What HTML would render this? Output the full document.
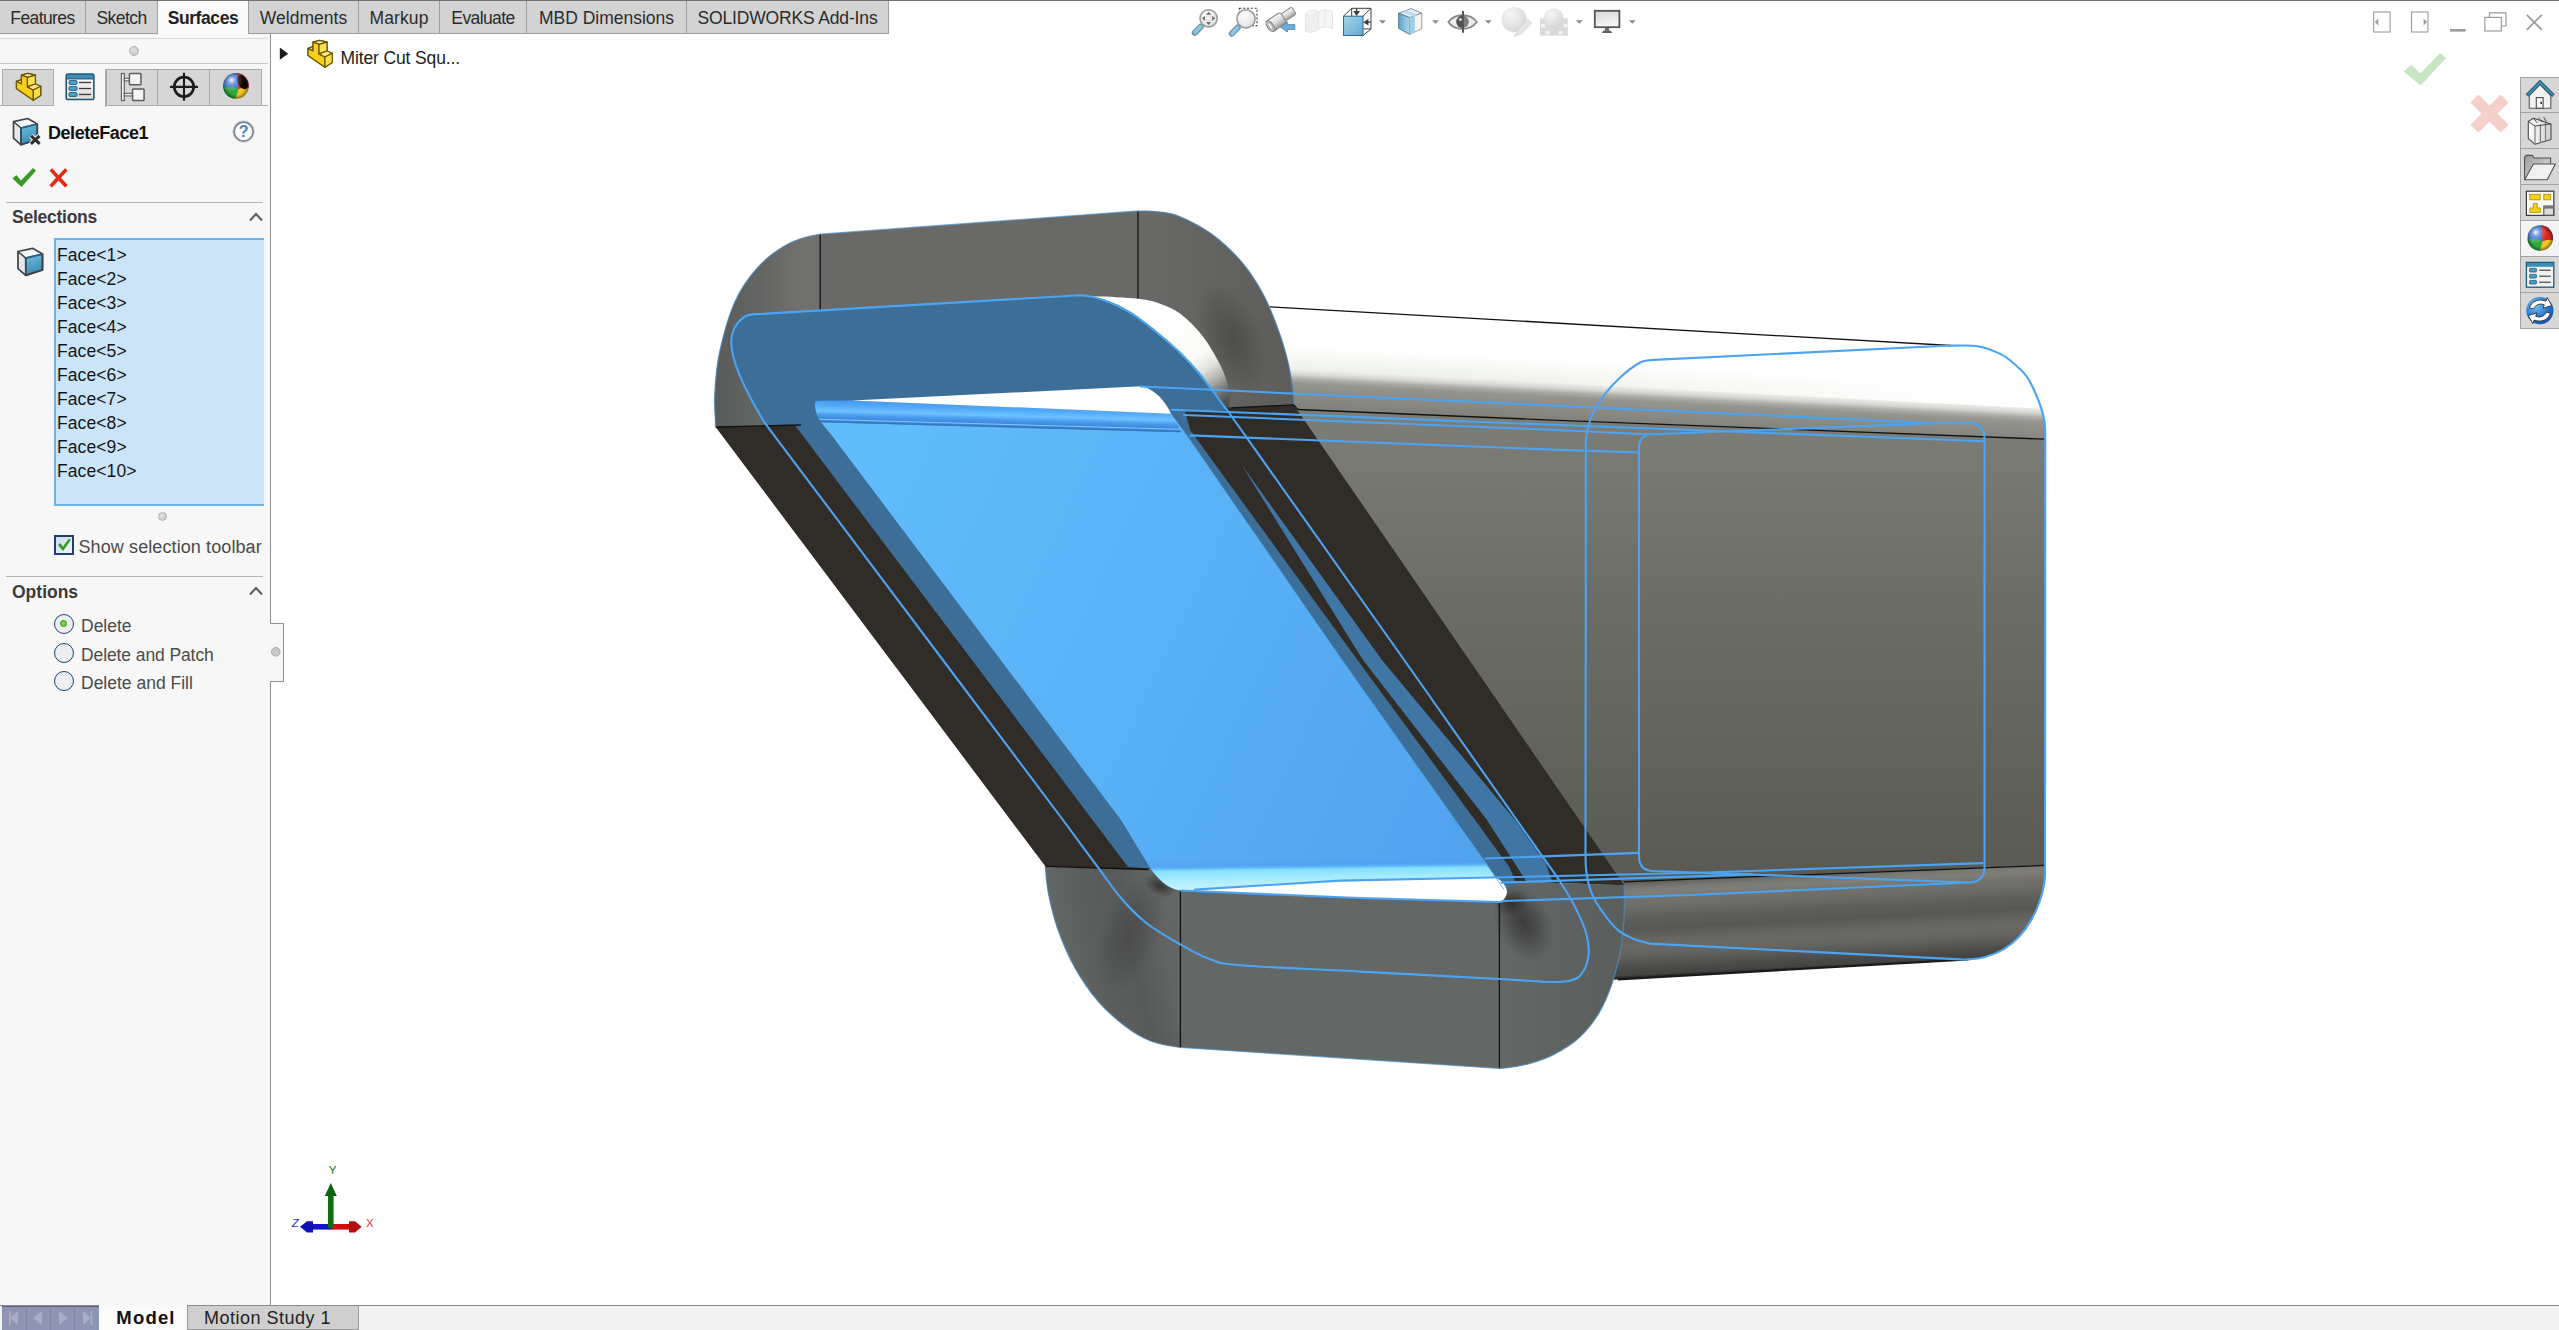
<!DOCTYPE html>
<html lang="en">
<head>
<meta charset="utf-8">
<title>DeleteFace1 - SOLIDWORKS</title>
<style>
*{box-sizing:border-box;margin:0;padding:0}
html,body{width:2559px;height:1330px;overflow:hidden;background:#fff}
body{font-family:"Liberation Sans","DejaVu Sans",sans-serif;color:#1a1a1a;position:relative}
.abs{position:absolute}
#topline{left:0;top:0;width:2559px;height:1px;background:#707070}
/* command manager tabs */
#cmtabs{left:0;top:1px;height:33px;width:889px;background:#d3d3d3;border-bottom:1px solid #9c9c9c}
.cmt{position:absolute;top:0;height:32px;border-right:1px solid #9e9e9e;font-size:17.5px;line-height:35px;color:#2b2b2b;white-space:nowrap;text-align:center}
.cmt.act{background:#fafafa;font-weight:bold;height:33px;color:#222}
/* left panel */
#panel{left:0;top:34px;width:271px;height:1271px;background:#f7f7f7;border-right:1px solid #8f8f8f}
.hline{position:absolute;height:1px;background:#b4b4b4}
.dot{position:absolute;border-radius:50%;background:radial-gradient(circle at 40% 35%,#e2e2e2,#c2c2c2);border:1px solid #b0b0b0}
.ptab{position:absolute;top:69px;height:37px;width:52px;background:#d6d6d6;border:1px solid #a9a9a9;border-left:none}
.ptab.act{background:#f7f7f7;border-bottom:none;border-top-color:#f7f7f7;height:38px}
.sect{position:absolute;left:12px;font-weight:bold;font-size:17.5px;color:#3a3a3a;white-space:nowrap;letter-spacing:-0.35px}
.lbl{position:absolute;font-size:17.5px;color:#4b4b4b;white-space:nowrap}
#list{left:54px;top:204px;width:210px;height:268px;background:#cce4f7;border:2px solid #6db3e8;border-right:none}
#list div{position:absolute;left:1px;margin-top:0.5px;font-size:17.5px;color:#161616;white-space:nowrap;letter-spacing:0.1px}
.radio{position:absolute;width:20px;height:20px;border-radius:50%;border:1.6px solid #203f6b;background:radial-gradient(circle at 50% 55%,#f6efe6 0,#e6eef7 70%,#dfe9f4 100%)}
/* bottom bar */
#bbar{left:0;top:1305px;width:2559px;height:25px;background:#f3f3f3;border-top:1px solid #8a8a8a}
</style>
</head>
<body>
<div class="abs" id="topline"></div>

<!-- ===== 3D MODEL ===== -->
<svg class="abs" id="model" style="left:271px;top:34px" width="2288" height="1271" viewBox="271 34 2288 1271">
<defs>
<linearGradient id="gTop" gradientUnits="userSpaceOnUse" x1="1560" y1="322" x2="1555" y2="418">
 <stop offset="0" stop-color="#ffffff"/><stop offset="0.40" stop-color="#ffffff"/><stop offset="0.50" stop-color="#f6f8f3"/><stop offset="0.63" stop-color="#eff1ec"/>
 <stop offset="0.69" stop-color="#d5d6d1"/><stop offset="0.73" stop-color="#aeaea9"/><stop offset="0.78" stop-color="#959590"/><stop offset="0.86" stop-color="#8e8d88"/><stop offset="1" stop-color="#83837e"/>
</linearGradient>
<linearGradient id="gTopW" gradientUnits="userSpaceOnUse" x1="1480" y1="0" x2="1960" y2="0">
 <stop offset="0" stop-color="#ffffff" stop-opacity="0"/><stop offset="1" stop-color="#ffffff" stop-opacity="0.9"/>
</linearGradient>
<linearGradient id="gSide" gradientUnits="userSpaceOnUse" x1="1700" y1="420" x2="1700" y2="880">
 <stop offset="0" stop-color="#7c7d77"/><stop offset="0.174" stop-color="#757670"/><stop offset="0.39" stop-color="#6c6d67"/><stop offset="0.913" stop-color="#5c5d57"/><stop offset="1" stop-color="#595a54"/>
</linearGradient>
<linearGradient id="gBot" gradientUnits="userSpaceOnUse" x1="1800" y1="874" x2="1805" y2="969">
 <stop offset="0" stop-color="#62625e"/><stop offset="0.06" stop-color="#7a7a75"/><stop offset="0.11" stop-color="#7f7e78"/><stop offset="0.17" stop-color="#74736e"/>
 <stop offset="0.26" stop-color="#6c6c68"/><stop offset="0.36" stop-color="#5f605d"/><stop offset="0.49" stop-color="#565856"/><stop offset="0.58" stop-color="#63645f"/>
 <stop offset="0.66" stop-color="#696a66"/><stop offset="0.74" stop-color="#656662"/><stop offset="0.82" stop-color="#595a57"/><stop offset="0.90" stop-color="#4b4b49"/>
 <stop offset="0.97" stop-color="#434341"/><stop offset="1" stop-color="#1c1c1a"/>
</linearGradient>
<linearGradient id="gTFL" gradientUnits="userSpaceOnUse" x1="715" y1="0" x2="822" y2="0">
 <stop offset="0" stop-color="#5a5c5b"/><stop offset="0.45" stop-color="#646664"/><stop offset="0.85" stop-color="#727371"/><stop offset="1" stop-color="#6e6f6d"/>
</linearGradient>
<linearGradient id="gTFR" gradientUnits="userSpaceOnUse" x1="1138" y1="0" x2="1292" y2="0">
 <stop offset="0" stop-color="#696a68"/><stop offset="0.4" stop-color="#646563"/><stop offset="1" stop-color="#5d5e5c"/>
</linearGradient>
<linearGradient id="gBFL" gradientUnits="userSpaceOnUse" x1="1050" y1="960" x2="1182" y2="930">
 <stop offset="0" stop-color="#666a69"/><stop offset="0.3" stop-color="#5c5f5e"/><stop offset="0.6" stop-color="#575a59"/><stop offset="0.85" stop-color="#616463"/><stop offset="1" stop-color="#636765"/>
</linearGradient>
<linearGradient id="gBFR" gradientUnits="userSpaceOnUse" x1="1499" y1="0" x2="1625" y2="0">
 <stop offset="0" stop-color="#636765"/><stop offset="0.5" stop-color="#5e6261"/><stop offset="1" stop-color="#5a5e5d"/>
</linearGradient>
<linearGradient id="gBlue" gradientUnits="userSpaceOnUse" x1="850" y1="500" x2="1480" y2="800">
 <stop offset="0" stop-color="#60bcfc"/><stop offset="0.5" stop-color="#59b1f6"/><stop offset="1" stop-color="#51a3ed"/>
</linearGradient>
<linearGradient id="gFilW" gradientUnits="userSpaceOnUse" x1="1160" y1="300" x2="1228" y2="400">
 <stop offset="0" stop-color="#ffffff"/><stop offset="0.55" stop-color="#fbfcf9"/><stop offset="0.68" stop-color="#e4e5e0"/><stop offset="0.8" stop-color="#b1b2ad"/><stop offset="0.9" stop-color="#787875"/><stop offset="1" stop-color="#4f4f4d"/>
</linearGradient>
<linearGradient id="gBand" gradientUnits="userSpaceOnUse" x1="1000" y1="405" x2="999.4" y2="427">
 <stop offset="0" stop-color="#479af0"/><stop offset="0.22" stop-color="#52a9f7"/><stop offset="0.48" stop-color="#6cc3ff"/><stop offset="0.66" stop-color="#4b9def"/><stop offset="0.84" stop-color="#3c89da"/><stop offset="1" stop-color="#438fde"/>
</linearGradient>
<linearGradient id="gCyan" gradientUnits="userSpaceOnUse" x1="1340" y1="858" x2="1340.4" y2="890">
 <stop offset="0" stop-color="#4f9fee" stop-opacity="0"/><stop offset="0.18" stop-color="#4f9fee" stop-opacity="0.55"/><stop offset="0.27" stop-color="#5cb8fa"/><stop offset="0.34" stop-color="#84dfff"/><stop offset="0.6" stop-color="#a6ebff"/><stop offset="1" stop-color="#d0f5ff"/>
</linearGradient>
<filter id="blur9" x="-50%" y="-50%" width="200%" height="200%"><feGaussianBlur stdDeviation="9"/></filter>
<filter id="blur4" x="-50%" y="-50%" width="200%" height="200%"><feGaussianBlur stdDeviation="4"/></filter>
<filter id="blur2" x="-50%" y="-50%" width="200%" height="200%"><feGaussianBlur stdDeviation="2"/></filter>
<radialGradient id="rgA"><stop offset="0" stop-color="#3c3c3b" stop-opacity="0.62"/><stop offset="0.5" stop-color="#3c3c3b" stop-opacity="0.36"/><stop offset="1" stop-color="#3c3c3b" stop-opacity="0"/></radialGradient>
<radialGradient id="rgC"><stop offset="0" stop-color="#2f2f2e" stop-opacity="0.78"/><stop offset="0.5" stop-color="#353534" stop-opacity="0.45"/><stop offset="1" stop-color="#3c3c3b" stop-opacity="0"/></radialGradient>
<radialGradient id="rgB"><stop offset="0" stop-color="#262625" stop-opacity="0.8"/><stop offset="0.5" stop-color="#2a2a29" stop-opacity="0.4"/><stop offset="1" stop-color="#2a2a29" stop-opacity="0"/></radialGradient>
<clipPath id="cpBF"><path d="M1045.3,866.3C1046.0,874.4 1046.3,883.2 1048.4,893.7 C1050.5,904.2 1053.5,917.2 1057.9,929.5 C1062.3,941.8 1068.0,955.5 1074.7,967.4 C1081.4,979.3 1089.5,991.2 1097.9,1001.0 C1106.3,1010.8 1116.5,1019.6 1125.3,1026.3 C1134.1,1033.0 1141.4,1037.5 1150.5,1041.0 C1159.6,1044.5 1169.8,1046.0 1180.0,1047.4L1499.4,1068.4C1509.7,1067.9 1520.4,1065.9 1529.6,1063.5 C1538.8,1061.1 1546.2,1058.5 1554.5,1054.2 C1562.8,1049.9 1571.9,1044.5 1579.3,1037.6 C1586.7,1030.7 1593.6,1022.0 1599.1,1012.8 C1604.6,1003.6 1608.8,993.1 1612.4,982.5 C1616.0,971.9 1618.7,959.9 1620.6,949.4 C1622.5,938.9 1623.4,930.3 1624.0,919.6 C1624.6,908.9 1624.2,895.2 1624.2,885.3Z"/></clipPath>
</defs>
<path d="M1240.0,304.9L1950.6,345.5C1960.2,345.9 1969.3,344.7 1977.7,346.2 C1986.1,347.7 1994.8,351.2 2001.2,354.4 C2007.6,357.6 2011.5,361.4 2016.0,365.5 C2020.5,369.6 2024.4,372.6 2028.2,378.7 C2032.0,384.8 2036.4,395.2 2039.1,402.2 C2041.8,409.2 2043.3,414.3 2044.3,420.5 C2045.3,426.7 2045.1,431.4 2045.3,439.6L1298.0,409.5 L1280.0,404.0Z" fill="url(#gTop)"/>
<path d="M1480,317.6 L1950.6,345.5 C1990,346 2028,372 2041,408.6 L1480,379.4 Z" fill="url(#gTopW)"/>
<path d="M1280.0,404.0L1298.0,409.5 L2045.3,439.2 L2045.0,865.4 L1610.0,882.5Z" fill="url(#gSide)"/>
<path d="M1600.0,882.7L2045.0,865.4C2044.9,873.2 2045.3,875.8 2044.5,881.6 C2043.7,887.5 2042.2,894.0 2040.0,900.5 C2037.8,907.0 2034.5,914.4 2031.0,920.4 C2027.5,926.4 2023.7,931.8 2019.2,936.6 C2014.7,941.4 2009.6,945.8 2003.9,949.2 C1998.2,952.6 1991.5,955.2 1985.0,956.9 C1978.5,958.6 1973.4,958.9 1965.1,959.6L1590.0,981.0Z" fill="url(#gBot)"/>
<path d="M715.6,427.0C715.3,416.2 714.1,407.4 714.7,395.0 C715.4,382.6 716.1,368.1 719.5,352.5 C722.9,336.9 728.5,315.9 735.0,301.6 C741.5,287.3 749.8,276.1 758.6,266.5 C767.4,256.9 777.8,249.4 788.0,244.0 C798.2,238.6 809.3,236.2 820.0,234.2L1138.0,211.0C1146.3,210.8 1151.1,210.9 1158.0,211.8 C1164.9,212.7 1170.5,212.7 1179.6,216.5 C1188.7,220.3 1202.2,227.0 1212.7,234.7 C1223.2,242.4 1234.2,253.2 1242.5,262.9 C1250.8,272.6 1256.9,282.8 1262.4,292.7 C1267.9,302.6 1271.8,312.5 1275.6,322.4 C1279.4,332.3 1282.9,342.8 1285.5,352.2 C1288.1,361.6 1289.8,369.9 1291.3,378.7 C1292.8,387.4 1293.7,397.0 1294.2,404.7Z" fill="#696a68"/>
<path d="M715.6,427.0C715.3,416.2 714.1,407.4 714.7,395.0 C715.4,382.6 716.1,368.1 719.5,352.5 C722.9,336.9 728.5,315.9 735.0,301.6 C741.5,287.3 749.8,276.1 758.6,266.5 C767.4,256.9 777.8,249.4 788.0,244.0 C798.2,238.6 809.3,236.2 820.0,234.2L820.2,423.0Z" fill="url(#gTFL)"/>
<path d="M1138.0,211.0C1146.3,210.8 1151.1,210.9 1158.0,211.8 C1164.9,212.7 1170.5,212.7 1179.6,216.5 C1188.7,220.3 1202.2,227.0 1212.7,234.7 C1223.2,242.4 1234.2,253.2 1242.5,262.9 C1250.8,272.6 1256.9,282.8 1262.4,292.7 C1267.9,302.6 1271.8,312.5 1275.6,322.4 C1279.4,332.3 1282.9,342.8 1285.5,352.2 C1288.1,361.6 1289.8,369.9 1291.3,378.7 C1292.8,387.4 1293.7,397.0 1294.2,404.7L1138.0,410.7Z" fill="url(#gTFR)"/>
<clipPath id="cpTFR"><path d="M1138.0,211.0C1146.3,210.8 1151.1,210.9 1158.0,211.8 C1164.9,212.7 1170.5,212.7 1179.6,216.5 C1188.7,220.3 1202.2,227.0 1212.7,234.7 C1223.2,242.4 1234.2,253.2 1242.5,262.9 C1250.8,272.6 1256.9,282.8 1262.4,292.7 C1267.9,302.6 1271.8,312.5 1275.6,322.4 C1279.4,332.3 1282.9,342.8 1285.5,352.2 C1288.1,361.6 1289.8,369.9 1291.3,378.7 C1292.8,387.4 1293.7,397.0 1294.2,404.7L1138.0,410.7Z"/></clipPath>
<g clip-path="url(#cpTFR)"><ellipse cx="1232" cy="338" rx="30" ry="58" transform="rotate(-22 1232 338)" fill="url(#rgA)" opacity="0.85"/></g>
<path d="M1080.0,295.3C1090.8,295.8 1096.7,297.7 1105.0,300.5 C1113.3,303.3 1121.7,307.3 1130.0,312.3 C1138.3,317.3 1146.5,324.1 1154.8,330.7 C1163.1,337.3 1172.1,345.0 1179.6,352.2 C1187.0,359.4 1193.4,366.5 1199.5,373.7 C1205.6,380.9 1211.3,389.1 1216.0,395.2 C1220.7,401.3 1222.7,405.0 1227.5,410.5C1230.9,403.9 1229.5,391.2 1227.4,383.7 C1225.3,376.1 1223.2,370.7 1219.0,362.6 C1214.8,354.5 1208.3,343.4 1202.0,335.3 C1195.7,327.2 1188.0,319.5 1181.0,314.2 C1174.0,308.9 1167.2,306.3 1160.0,303.7 C1152.8,301.1 1149.2,300.0 1138.0,298.8 C1126.8,297.6 1107.3,296.6 1092.6,296.3Z" fill="url(#gFilW)"/>
<path d="M715.6,427 L1293.7,404.7 L1624.2,885.3 L1045.3,866.3 Z" fill="#302c27"/>
<path d="M1045.3,866.3C1046.0,874.4 1046.3,883.2 1048.4,893.7 C1050.5,904.2 1053.5,917.2 1057.9,929.5 C1062.3,941.8 1068.0,955.5 1074.7,967.4 C1081.4,979.3 1089.5,991.2 1097.9,1001.0 C1106.3,1010.8 1116.5,1019.6 1125.3,1026.3 C1134.1,1033.0 1141.4,1037.5 1150.5,1041.0 C1159.6,1044.5 1169.8,1046.0 1180.0,1047.4L1499.4,1068.4C1509.7,1067.9 1520.4,1065.9 1529.6,1063.5 C1538.8,1061.1 1546.2,1058.5 1554.5,1054.2 C1562.8,1049.9 1571.9,1044.5 1579.3,1037.6 C1586.7,1030.7 1593.6,1022.0 1599.1,1012.8 C1604.6,1003.6 1608.8,993.1 1612.4,982.5 C1616.0,971.9 1618.7,959.9 1620.6,949.4 C1622.5,938.9 1623.4,930.3 1624.0,919.6 C1624.6,908.9 1624.2,895.2 1624.2,885.3Z" fill="#636765"/>
<path d="M1045.3,866.3C1046.0,874.4 1046.3,883.2 1048.4,893.7 C1050.5,904.2 1053.5,917.2 1057.9,929.5 C1062.3,941.8 1068.0,955.5 1074.7,967.4 C1081.4,979.3 1089.5,991.2 1097.9,1001.0 C1106.3,1010.8 1116.5,1019.6 1125.3,1026.3 C1134.1,1033.0 1141.4,1037.5 1150.5,1041.0 C1159.6,1044.5 1169.8,1046.0 1180.0,1047.4L1180.4,871.0Z" fill="url(#gBFL)"/>
<path d="M1499.4,1068.4C1509.7,1067.9 1520.4,1065.9 1529.6,1063.5 C1538.8,1061.1 1546.2,1058.5 1554.5,1054.2 C1562.8,1049.9 1571.9,1044.5 1579.3,1037.6 C1586.7,1030.7 1593.6,1022.0 1599.1,1012.8 C1604.6,1003.6 1608.8,993.1 1612.4,982.5 C1616.0,971.9 1618.7,959.9 1620.6,949.4 C1622.5,938.9 1623.4,930.3 1624.0,919.6 C1624.6,908.9 1624.2,895.2 1624.2,885.3L1499.4,881.2Z" fill="url(#gBFR)"/>
<g clip-path="url(#cpBF)"><ellipse cx="1130" cy="935" rx="30" ry="62" transform="rotate(20 1130 935)" fill="url(#rgA)" opacity="0.72"/><ellipse cx="1160" cy="886" rx="17" ry="10" transform="rotate(28 1160 886)" fill="url(#rgB)"/><ellipse cx="1523" cy="922" rx="27" ry="42" transform="rotate(-25 1523 922)" fill="url(#rgC)"/><ellipse cx="1511" cy="903" rx="17" ry="14" fill="url(#rgB)"/></g>
<path d="M766.2,424.8C759.6,414.9 754.8,405.8 750.3,397.5 C745.8,389.2 742.4,381.8 739.5,374.9 C736.6,368.0 734.5,361.7 733.1,356.0 C731.7,350.3 731.1,345.1 731.3,340.6 C731.4,336.1 732.3,332.4 734.0,328.9 C735.7,325.4 738.3,321.8 741.3,319.4 C744.3,317.0 744.0,315.6 752.1,314.4L1080.0,295.3C1090.8,295.8 1096.7,297.7 1105.0,300.5 C1113.3,303.3 1121.7,307.3 1130.0,312.3 C1138.3,317.3 1146.5,324.1 1154.8,330.7 C1163.1,337.3 1172.1,345.0 1179.6,352.2 C1187.0,359.4 1193.4,366.5 1199.5,373.7 C1205.6,380.9 1211.3,389.1 1216.0,395.2 C1220.7,401.3 1222.7,405.0 1227.5,410.5L1185.0,411.6 L1190.5,430.5 L1357.5,660.0 L1475.0,820.0 L1510.0,868.0 L1516.0,884.0L1504.0,889.5 L1180.4,890.5C1168,888.5 1160,881 1150.5,868.5L1128.0,867.0 L795.0,425.3Z" fill="#3c6e97"/>
<path d="M1241,464 L1382,660 L1515,820 L1546,864 L1552,881 L1526,881 L1487,820 L1363,660 Z" fill="#3f76a6"/>
<path d="M816.0,410.0L1170.5,413.0 L1183.0,430.0 L1342.0,660.0 L1489.5,868.4 L1504.0,889.5 L1180.4,890.5C1168,888.5 1160,881 1150.5,868.5L1121.0,820.0 L830.5,433.7C822,424 817,418 816,410 Z" fill="url(#gBlue)"/>
<path d="M814.8,404.0C815,402 816,401 818,400.8L851.6,400.6 L1171.0,413.6 L1176.0,421.0 L1181.0,432.2 L1000.0,427.2 L821.0,422.3C817,416 815,410 814.8,404 Z" fill="url(#gBand)"/>
<path d="M820.5,421.6 L1000,426.6 L1180.5,431.4" fill="none" stroke="#3676b8" stroke-width="1.5"/>
<path d="M819.5,419.3 L1000,424.3 L1179.5,429.2" fill="none" stroke="#7cc6ff" stroke-width="1.1"/>
<path d="M851.6,400.4L1140.6,386.3C1150,388 1158,394 1164,402 C1167,406 1169.5,410 1171,413.8Z" fill="#ffffff"/>
<path d="M1138.0,857.0L1482.0,857.0 L1496.0,878.0 L1480.0,877.8 L1340.0,880.6 L1197.0,890.0 L1180.4,890.5C1168,888.5 1160,881 1150.5,868.5 L1143,857 Z" fill="url(#gCyan)"/>
<path d="M1197.0,890.0L1340.0,880.6 L1480.0,877.8 L1495.0,877.5C1502,880 1506.5,886 1507,892 C1506.5,897 1503.5,901 1499.4,902L1360.0,898.0 L1180.4,890.5Z" fill="#ffffff"/>
<g fill="none" stroke="#111" stroke-width="1.3"><path d="M820.2,234.5 V310.5"/><path d="M1138,211.3 V298.5"/><path d="M1180.4,891 V1047.3"/><path d="M1499.4,902.5 V1068.3"/><path d="M1269.5,306.8 L1950.6,345.5"/><path d="M1298,409.5 L1540,419.6 L2045,439.2"/><path d="M1623.8,881.8 L2045,865.4"/><path d="M715.6,427 L801,425"/><path d="M1231.6,407.9 L1293.7,404.9 L1298,409.5"/><path d="M1045.3,866.3 L1148.4,869.5"/></g>
<path d="M1617.8,979.4 L1968.5,959.5" fill="none" stroke="#1a1a18" stroke-width="2"/>
<path d="M715.6,427.0C715.3,416.2 714.1,407.4 714.7,395.0 C715.4,382.6 716.1,368.1 719.5,352.5 C722.9,336.9 728.5,315.9 735.0,301.6 C741.5,287.3 749.8,276.1 758.6,266.5 C767.4,256.9 777.8,249.4 788.0,244.0 C798.2,238.6 809.3,236.2 820.0,234.2L1138.0,211.0C1146.3,210.8 1151.1,210.9 1158.0,211.8 C1164.9,212.7 1170.5,212.7 1179.6,216.5 C1188.7,220.3 1202.2,227.0 1212.7,234.7 C1223.2,242.4 1234.2,253.2 1242.5,262.9 C1250.8,272.6 1256.9,282.8 1262.4,292.7 C1267.9,302.6 1271.8,312.5 1275.6,322.4 C1279.4,332.3 1282.9,342.8 1285.5,352.2 C1288.1,361.6 1289.8,369.9 1291.3,378.7 C1292.8,387.4 1293.7,397.0 1294.2,404.7" fill="none" stroke="#4a8ec6" stroke-width="1.3" opacity="0.7"/>
<path d="M1045.3,866.3C1046.0,874.4 1046.3,883.2 1048.4,893.7 C1050.5,904.2 1053.5,917.2 1057.9,929.5 C1062.3,941.8 1068.0,955.5 1074.7,967.4 C1081.4,979.3 1089.5,991.2 1097.9,1001.0 C1106.3,1010.8 1116.5,1019.6 1125.3,1026.3 C1134.1,1033.0 1141.4,1037.5 1150.5,1041.0 C1159.6,1044.5 1169.8,1046.0 1180.0,1047.4L1499.4,1068.4C1509.7,1067.9 1520.4,1065.9 1529.6,1063.5 C1538.8,1061.1 1546.2,1058.5 1554.5,1054.2 C1562.8,1049.9 1571.9,1044.5 1579.3,1037.6 C1586.7,1030.7 1593.6,1022.0 1599.1,1012.8 C1604.6,1003.6 1608.8,993.1 1612.4,982.5 C1616.0,971.9 1618.7,959.9 1620.6,949.4 C1622.5,938.9 1623.4,930.3 1624.0,919.6 C1624.6,908.9 1624.2,895.2 1624.2,885.3" fill="none" stroke="#4a8ec6" stroke-width="1.3" opacity="0.7"/>
<g fill="none" stroke="#4ba4f3" stroke-width="2.1" stroke-linejoin="round" stroke-linecap="round">
<path d="M766.2,424.8C759.6,414.9 754.8,405.8 750.3,397.5 C745.8,389.2 742.4,381.8 739.5,374.9 C736.6,368.0 734.5,361.7 733.1,356.0 C731.7,350.3 731.1,345.1 731.3,340.6 C731.4,336.1 732.3,332.4 734.0,328.9 C735.7,325.4 738.3,321.8 741.3,319.4 C744.3,317.0 744.0,315.6 752.1,314.4L1080.0,295.3C1090.8,295.8 1096.7,297.7 1105.0,300.5 C1113.3,303.3 1121.7,307.3 1130.0,312.3 C1138.3,317.3 1146.5,324.1 1154.8,330.7 C1163.1,337.3 1172.1,345.0 1179.6,352.2 C1187.0,359.4 1193.4,366.5 1199.5,373.7 C1205.6,380.9 1211.3,389.1 1216.0,395.2 C1220.7,401.3 1222.7,405.0 1227.5,410.5L1404.2,660.0 L1516.8,820.0C1521.0,826.0 1534.6,845.3 1542.0,855.8 C1549.4,866.3 1555.4,874.2 1561.0,883.0 C1566.6,891.8 1571.6,899.9 1575.8,908.4 C1580.0,916.9 1584.2,925.6 1586.3,933.7 C1588.4,941.8 1589.5,949.8 1588.4,956.8 C1587.4,963.8 1583.4,971.8 1580.0,975.8 C1576.6,979.8 1573.3,980.0 1568.0,981.0 C1562.7,982.0 1559.4,982.3 1548.0,982.0 C1536.6,981.7 1530.7,980.7 1499.4,979.0 C1468.1,977.3 1403.1,973.9 1360.0,971.6 C1316.9,969.3 1266.1,967.4 1241.0,965.3 C1215.9,963.2 1219.7,962.5 1209.5,959.0 C1199.3,955.5 1190.5,950.2 1180.0,944.2 C1169.5,938.2 1156.1,930.7 1146.3,923.0 C1136.5,915.3 1129.0,907.3 1121.0,898.0 C1113.0,888.7 1107.7,880.4 1098.0,867.4 C1088.3,854.4 1068.8,827.9 1063.0,820.0L957.9,680.0Z"/>
<path d="M1585.9,439.6C1586.9,430.6 1588.9,423.0 1591.9,415.7 C1594.9,408.4 1599.2,402.0 1603.8,395.7 C1608.4,389.4 1613.8,383.3 1619.8,377.8 C1625.8,372.3 1634.0,365.8 1639.7,362.8 C1645.4,359.8 1645.3,360.7 1653.7,359.9L1950.6,345.5C1960.2,345.9 1969.3,344.7 1977.7,346.2 C1986.1,347.7 1994.8,351.2 2001.2,354.4 C2007.6,357.6 2011.5,361.4 2016.0,365.5 C2020.5,369.6 2024.4,372.6 2028.2,378.7 C2032.0,384.8 2036.4,395.2 2039.1,402.2 C2041.8,409.2 2043.3,414.3 2044.3,420.5 C2045.3,426.7 2045.1,431.4 2045.3,439.6L2045.0,865.4C2044.9,873.2 2045.3,875.8 2044.5,881.6 C2043.7,887.5 2042.2,894.0 2040.0,900.5 C2037.8,907.0 2034.5,914.4 2031.0,920.4 C2027.5,926.4 2023.7,931.8 2019.2,936.6 C2014.7,941.4 2009.6,945.8 2003.9,949.2 C1998.2,952.6 1991.5,955.2 1985.0,956.9 C1978.5,958.6 1973.4,958.9 1965.1,959.6L1649.7,943.6C1639.7,941.4 1628.0,937.4 1619.8,931.6 C1611.6,925.8 1605.2,915.5 1600.4,908.8 C1595.6,902.1 1593.3,897.7 1591.0,891.6 C1588.7,885.5 1587.2,878.9 1586.3,872.0 C1585.4,865.1 1585.6,858.7 1585.5,850.0Z"/>
<path d="M1639,448 C1639.3,439 1643,434.6 1651,434.2 L1936,423.3 L1969,423 C1979,423.3 1984.3,428 1984.5,438 V868 C1984.3,878 1979,882.3 1968.8,882.5 L1652,871 C1643.5,870.3 1639.3,866 1639,857 Z"/>
<path d="M1140.6,386.5 L1936,423.2"/>
<path d="M1171.6,409.8 L1540,424.3 L1983.5,441.3"/>
<path d="M1184,415 L1540,429.3 L1648,434.2"/>
<path d="M1190.5,435.4 L1540,449.1 L1639,452.5"/>
<path d="M1485.2,858.5 L1638.6,852.9"/>
<path d="M1195,889.6 L1340,880.6 L1480,877.8 L1700,872.7 L1982.5,863.1"/>
<path d="M1501.5,882.6 L1700,876.1 L1752,874.4"/>
<path d="M1180.4,890.5 L1360,898 L1499.4,902 L1504,901 L1690,895 L1968.8,882.5"/>
</g>
<path d="M1183,430 L1342,660 L1489.5,868.4 L1504,889.5" fill="none" stroke="#4aa0ee" stroke-width="1" opacity="0.8"/>
</svg>

<!-- ===== command manager tabs ===== -->
<div class="abs" id="cmtabs">
  <div class="cmt" style="left:0;width:86px;letter-spacing:-0.6px">Features</div>
  <div class="cmt" style="left:86px;width:72px;letter-spacing:-0.55px">Sketch</div>
  <div class="cmt act" style="left:158px;width:91px;letter-spacing:-0.4px">Surfaces</div>
  <div class="cmt" style="left:249px;width:110px;letter-spacing:0.03px">Weldments</div>
  <div class="cmt" style="left:359px;width:81px;letter-spacing:0.12px">Markup</div>
  <div class="cmt" style="left:440px;width:87px;letter-spacing:-0.6px">Evaluate</div>
  <div class="cmt" style="left:527px;width:160px">MBD Dimensions</div>
  <div class="cmt" style="left:687px;width:202px;letter-spacing:-0.16px">SOLIDWORKS Add-Ins</div>
</div>

<!-- ===== left property panel ===== -->
<div class="abs" id="panel">

<div class="hline" style="left:0;top:4px;width:268px;background:#d9d9d9"></div>
<div class="dot" style="left:129px;top:12px;width:10px;height:10px"></div>
<div class="hline" style="left:0;top:29px;width:268px;background:#c9c9c9"></div>
<div class="hline" style="left:0;top:71px;width:268px;background:#a9a9a9"></div>
<div class="ptab" style="left:2px;border-left:1px solid #a9a9a9;top:35px"></div>
<div class="ptab act" style="left:54px;top:35px"></div>
<div class="ptab" style="left:106px;top:35px;border-left:1px solid #a9a9a9"></div>
<div class="ptab" style="left:158px;top:35px"></div>
<div class="ptab" style="left:210px;top:35px"></div>

<svg class="abs" style="left:0;top:30px" width="266" height="46" viewBox="0 64 266 46"><polygon points="16.43,81.43 21.43,79.71 21.43,75.14 28.00,73.29 35.43,75.14 35.43,84.00 40.71,86.29 40.71,95.43 33.29,100.29 16.43,88.57" fill="#f4d020" stroke="#6e5600" stroke-width="1.25" stroke-linejoin="round"/><polygon points="16.43,81.43 21.43,79.71 21.43,83.94" fill="#fbe98a" stroke="#6e5600" stroke-width="1.25" stroke-linejoin="round"/><polygon points="21.43,75.14 28.00,73.29 35.43,75.14 27.43,77.43" fill="#fcec94" stroke="#6e5600" stroke-width="1.25" stroke-linejoin="round"/><polygon points="21.43,75.14 27.43,77.43 27.43,86.91 33.29,90.00 33.29,100.29 16.43,88.57 16.43,81.43 21.43,83.94" fill="#f5d01c" stroke="#6e5600" stroke-width="1.25" stroke-linejoin="round"/><polygon points="27.43,77.43 35.43,75.14 35.43,84.00 27.43,86.91" fill="#f7e152" stroke="#6e5600" stroke-width="1.25" stroke-linejoin="round"/><polygon points="27.43,86.91 35.43,84.00 40.71,86.29 33.29,90.00" fill="#fbe98a" stroke="#6e5600" stroke-width="1.25" stroke-linejoin="round"/><polygon points="33.29,90.00 40.71,86.29 40.71,95.43 33.29,100.29" fill="#f6de4a" stroke="#6e5600" stroke-width="1.25" stroke-linejoin="round"/><linearGradient id="plg" x1="0" y1="0" x2="0" y2="1"><stop offset="0" stop-color="#ffffff"/><stop offset="1" stop-color="#d9d9d9"/></linearGradient><rect x="66.22" y="74.08" width="27.65" height="25.47" rx="1.6" fill="url(#plg)" stroke="#1b5876" stroke-width="1.6"/><rect x="66.82" y="74.68" width="26.45" height="4.26" fill="#3f8db6"/><path d="M66.22,78.95 H93.87" stroke="#1b5876" stroke-width="1"/><rect x="69.13" y="80.63" width="7.80" height="3.74" rx="0.8" fill="#55a6cf" stroke="#1b5876" stroke-width="1"/><path d="M79.00,82.50 H91.06" stroke="#3a3a3a" stroke-width="1.3"/><rect x="69.13" y="86.66" width="7.80" height="3.64" rx="0.8" fill="#55a6cf" stroke="#1b5876" stroke-width="1"/><path d="M79.00,88.53 H91.06" stroke="#3a3a3a" stroke-width="1.3"/><rect x="69.13" y="92.69" width="7.80" height="3.64" rx="0.8" fill="#55a6cf" stroke="#1b5876" stroke-width="1"/><path d="M79.00,94.46 H91.06" stroke="#3a3a3a" stroke-width="1.3"/><rect x="121.41" y="73.56" width="2.91" height="27.03" fill="#fafafa" stroke="#6a6a6a" stroke-width="1.3"/><rect x="124.32" y="78.35" width="5.09" height="2.49" fill="#fafafa" stroke="#6a6a6a" stroke-width="1.2"/><rect x="129.42" y="73.56" width="11.54" height="11.23" rx="0.8" fill="#f4f4f4" stroke="#5e5e5e" stroke-width="1.5"/><rect x="124.32" y="93.42" width="8.21" height="2.49" fill="#fafafa" stroke="#6a6a6a" stroke-width="1.2"/><rect x="132.54" y="88.95" width="11.54" height="11.43" rx="0.8" fill="#f4f4f4" stroke="#5e5e5e" stroke-width="1.5"/><circle cx="183.99" cy="86.87" r="9.7" fill="none" stroke="#1c1c1c" stroke-width="2.7"/><path d="M169.99,86.87 H197.99 M183.99,72.87 V100.87" stroke="#1c1c1c" stroke-width="2.1"/><clipPath id="bca"><circle cx="235.97" cy="85.83" r="12.9"/></clipPath><radialGradient id="bha" cx="0.33" cy="0.28" r="0.45"><stop offset="0" stop-color="#fff" stop-opacity="0.95"/><stop offset="0.35" stop-color="#fff" stop-opacity="0.35"/><stop offset="1" stop-color="#fff" stop-opacity="0"/></radialGradient><radialGradient id="bsa" cx="0.5" cy="0.5" r="0.5"><stop offset="0.7" stop-color="#000" stop-opacity="0"/><stop offset="1" stop-color="#000" stop-opacity="0.45"/></radialGradient><g clip-path="url(#bca)"><rect x="223.07" y="72.93" width="25.8" height="25.8" fill="#2c66d3"/><path d="M222.07,87.33 Q232.97,86.33 238.47,88.83 Q236.97,94.83 234.97,99.73 H222.07 Z" fill="#2fa83a"/><path d="M238.47,88.83 Q243.97,86.83 249.87,87.83 V99.73 H234.97 Q236.97,94.83 238.47,88.83 Z" fill="#f2c21e"/><path d="M237.47,71.93 Q236.47,81.83 238.47,88.83 Q243.97,86.83 249.87,87.83 V71.93 Z" fill="#d8261c"/><ellipse cx="242.57" cy="82.23" rx="4.6" ry="7.6" transform="rotate(-28 242.57 82.23)" fill="#120606"/><circle cx="235.97" cy="85.83" r="12.9" fill="url(#bsa)"/><circle cx="235.97" cy="85.83" r="12.9" fill="url(#bha)"/></g></svg>
<svg class="abs" style="left:10px;top:81px" width="34" height="34" viewBox="10 115 34 34"><polygon points="13.50,121.60 27.70,118.50 37.30,124.00 21.00,128.00" fill="#f3f8fa"/><polygon points="13.50,121.60 21.00,128.00 21.00,144.80 13.50,138.20" fill="#e3e8ee"/><linearGradient id="cg13" x1="0" y1="0" x2="0.3" y2="1"><stop offset="0" stop-color="#6cc4e2"/><stop offset="1" stop-color="#3d8ab4"/></linearGradient><polygon points="21.00,128.00 37.30,124.00 37.30,139.50 21.00,144.80" fill="url(#cg13)"/><polygon points="21.00,128.00 37.30,124.00 37.30,139.50 21.00,144.80" fill="none" stroke="#1c5878" stroke-width="1.6" stroke-linejoin="round"/><polygon points="13.50,121.60 27.70,118.50 37.30,124.00 37.30,139.50 21.00,144.80 13.50,138.20" fill="none" stroke="#454545" stroke-width="1.7" stroke-linejoin="round"/><path d="M13.50,121.60 L21.00,128.00 L21.00,144.80" fill="none" stroke="#454545" stroke-width="1.5"/><path d="M21.00,128.00 L37.30,124.00" fill="none" stroke="#35617a" stroke-width="1.5"/><path d="M31.099999999999998,135.8 L39.699999999999996,143.9 M39.5,135.8 L30.9,143.9" stroke="#f7f7f7" stroke-width="5" fill="none"/><path d="M31.099999999999998,135.8 L39.699999999999996,143.9 M39.5,135.8 L30.9,143.9" stroke="#2e3030" stroke-width="3" fill="none"/></svg>
<div class="abs" style="left:48px;top:88.5px;font-weight:bold;font-size:18px;letter-spacing:-0.45px;color:#111;white-space:nowrap">DeleteFace1</div>
<svg class="abs" style="left:230px;top:84px" width="28" height="28" viewBox="230 118 28 28"><circle cx="243.6" cy="131.6" r="9.6" fill="#fbfbfb" stroke="#7b8794" stroke-width="2"/><circle cx="243.6" cy="131.6" r="10.8" fill="none" stroke="#c9ced4" stroke-width="0.9"/><text x="243.6" y="137.2" text-anchor="middle" font-family="Liberation Sans, sans-serif" font-weight="bold" font-size="16" fill="#3d86b8">?</text></svg>
<svg class="abs" style="left:11px;top:132px" width="60" height="24" viewBox="0 0 60 24">
  <path d="M1.5,12.5 L5.5,9 L10,14.5 L22,2 L25,4.8 L10.5,21 Z" fill="#3a9a28"/>
  <path d="M38.5,4.5 L41.2,2.2 L47.5,9.3 L54,2.2 L56.6,4.6 L50,11.8 L56.8,19.2 L54,21.6 L47.5,14.4 L41,21.6 L38.3,19.2 L45,11.8 Z" fill="#e02b10"/>
</svg>

<div class="hline" style="left:6px;top:168px;width:257px"></div>
<div class="sect" style="top:173px;letter-spacing:-0.25px">Selections</div>
<svg class="abs" style="left:248px;top:177px" width="16" height="12" viewBox="0 0 16 12"><path d="M2,9.5 L8,3 L14,9.5" fill="none" stroke="#5c5c5c" stroke-width="2"/></svg>
<svg class="abs" style="left:14px;top:210px" width="32" height="34" viewBox="14 244 32 34"><polygon points="18.00,251.49 32.63,248.30 42.51,253.97 25.73,258.09" fill="#f3f8fa"/><polygon points="18.00,251.49 25.73,258.09 25.73,275.39 18.00,268.59" fill="#e3e8ee"/><linearGradient id="cg18" x1="0" y1="0" x2="0.3" y2="1"><stop offset="0" stop-color="#6cc4e2"/><stop offset="1" stop-color="#3d8ab4"/></linearGradient><polygon points="25.73,258.09 42.51,253.97 42.51,269.93 25.73,275.39" fill="url(#cg18)"/><polygon points="25.73,258.09 42.51,253.97 42.51,269.93 25.73,275.39" fill="none" stroke="#1c5878" stroke-width="1.6480000000000001" stroke-linejoin="round"/><polygon points="18.00,251.49 32.63,248.30 42.51,253.97 42.51,269.93 25.73,275.39 18.00,268.59" fill="none" stroke="#454545" stroke-width="1.751" stroke-linejoin="round"/><path d="M18.00,251.49 L25.73,258.09 L25.73,275.39" fill="none" stroke="#454545" stroke-width="1.545"/><path d="M25.73,258.09 L42.51,253.97" fill="none" stroke="#35617a" stroke-width="1.545"/></svg>
<div class="abs" id="list">
<div style="top:4px">Face&lt;1&gt;</div>
<div style="top:28px">Face&lt;2&gt;</div>
<div style="top:52px">Face&lt;3&gt;</div>
<div style="top:76px">Face&lt;4&gt;</div>
<div style="top:100px">Face&lt;5&gt;</div>
<div style="top:124px">Face&lt;6&gt;</div>
<div style="top:148px">Face&lt;7&gt;</div>
<div style="top:172px">Face&lt;8&gt;</div>
<div style="top:196px">Face&lt;9&gt;</div>
<div style="top:220px">Face&lt;10&gt;</div>
</div>
<div class="dot" style="left:158px;top:478px;width:9px;height:9px"></div>
<div class="abs" style="left:54px;top:501px;width:20px;height:20px;border:2px solid #1f3f6e;background:linear-gradient(135deg,#cfdcea,#f1f5fa)"><svg width="16" height="16" viewBox="0 0 16 16" style="position:absolute;left:0;top:0"><path d="M2,8 L4.5,6 L6.8,9.8 L13,1.5 L14.8,3 L7,14 Z" fill="#2e9a1f"/></svg></div>
<div class="lbl" style="left:78.5px;top:502.5px;letter-spacing:0.1px;font-size:18px">Show selection toolbar</div>

<div class="hline" style="left:6px;top:542px;width:257px"></div>
<div class="sect" style="top:547.5px;letter-spacing:0">Options</div>
<svg class="abs" style="left:248px;top:551px" width="16" height="12" viewBox="0 0 16 12"><path d="M2,9.5 L8,3 L14,9.5" fill="none" stroke="#5c5c5c" stroke-width="2"/></svg>
<div class="radio" style="left:54px;top:580px"><div style="position:absolute;left:5px;top:5px;width:7px;height:7px;border-radius:50%;background:radial-gradient(circle,#9bd96a 0,#4cae2a 60%,#8fce78 100%)"></div></div>
<div class="lbl" style="left:81px;top:582px">Delete</div>
<div class="radio" style="left:54px;top:609px"></div>
<div class="lbl" style="left:81px;top:610.5px;letter-spacing:-0.1px">Delete and Patch</div>
<div class="radio" style="left:54px;top:637px"></div>
<div class="lbl" style="left:81px;top:639px">Delete and Fill</div>

</div>


<!-- splitter notch -->
<svg class="abs" style="left:268px;top:618px" width="20" height="70" viewBox="268 618 20 70"><path d="M270.5,623.5 H283.5 V681.5 H270.5" fill="#f7f7f7" stroke="#8f8f8f" stroke-width="1"/><rect x="269" y="624" width="2.2" height="57" fill="#f7f7f7"/><circle cx="275.8" cy="651.8" r="4.3" fill="#c9c9c9" stroke="#a8a8a8" stroke-width="1"/></svg>
<svg class="abs" style="left:0;top:0;pointer-events:none" width="2559" height="1330" viewBox="0 0 2559 1330"><path d="M279.8,47.6 V59.8 L288.2,53.7 Z" fill="#1b1b1b"/><polygon points="308.03,48.43 313.03,46.71 313.03,42.14 319.60,40.29 327.03,42.14 327.03,51.00 332.31,53.29 332.31,62.43 324.89,67.29 308.03,55.57" fill="#f4d020" stroke="#6e5600" stroke-width="1.25" stroke-linejoin="round"/><polygon points="308.03,48.43 313.03,46.71 313.03,50.94" fill="#fbe98a" stroke="#6e5600" stroke-width="1.25" stroke-linejoin="round"/><polygon points="313.03,42.14 319.60,40.29 327.03,42.14 319.03,44.43" fill="#fcec94" stroke="#6e5600" stroke-width="1.25" stroke-linejoin="round"/><polygon points="313.03,42.14 319.03,44.43 319.03,53.91 324.89,57.00 324.89,67.29 308.03,55.57 308.03,48.43 313.03,50.94" fill="#f5d01c" stroke="#6e5600" stroke-width="1.25" stroke-linejoin="round"/><polygon points="319.03,44.43 327.03,42.14 327.03,51.00 319.03,53.91" fill="#f7e152" stroke="#6e5600" stroke-width="1.25" stroke-linejoin="round"/><polygon points="319.03,53.91 327.03,51.00 332.31,53.29 324.89,57.00" fill="#fbe98a" stroke="#6e5600" stroke-width="1.25" stroke-linejoin="round"/><polygon points="324.89,57.00 332.31,53.29 332.31,62.43 324.89,67.29" fill="#f6de4a" stroke="#6e5600" stroke-width="1.25" stroke-linejoin="round"/><text x="340.5" y="64.3" font-family="Liberation Sans, sans-serif" font-size="17.5" letter-spacing="-0.13" fill="#1d1d1d">Miter Cut Squ...</text><path d="M1203.7,23.7 L1194.8,32.8" stroke="#7f8a92" stroke-width="2.2" stroke-linecap="round"/><path d="M1200.8,26.6 L1194.8,32.8" stroke="#6c8fa6" stroke-width="6" stroke-linecap="round"/><path d="M1200.6,26.8 L1195.1,32.5" stroke="#8fc3e2" stroke-width="3.8" stroke-linecap="round"/><radialGradient id="mg1" cx="0.4" cy="0.35" r="0.7"><stop offset="0" stop-color="#ffffff"/><stop offset="1" stop-color="#dcdfe2"/></radialGradient><circle cx="1208.6" cy="18.3" r="8.6" fill="url(#mg1)" stroke="#9b9b9b" stroke-width="1.6"/><g fill="#6e6e6e"><path d="M1206.0,14.700000000000001 h5.2 l-2.6,-3 Z"/><path d="M1206.0,21.900000000000002 h5.2 l-2.6,3 Z"/><path d="M1205.0,15.700000000000001 v5.2 l-3,-2.6 Z"/><path d="M1212.1999999999998,15.700000000000001 v5.2 l3,-2.6 Z"/></g><rect x="1206.3999999999999" y="16.1" width="4.4" height="4.4" fill="none" stroke="#b5b5b5" stroke-width="0.8" stroke-dasharray="1 1"/><rect x="1239.4" y="8.3" width="17.6" height="17.3" fill="none" stroke="#4a4a4a" stroke-width="1.1" stroke-dasharray="2.2 1.6"/><path d="M1240.7,24.6 L1231.8,33.7" stroke="#7f8a92" stroke-width="2.2" stroke-linecap="round"/><path d="M1237.8,27.5 L1231.8,33.7" stroke="#6c8fa6" stroke-width="6" stroke-linecap="round"/><path d="M1237.6,27.7 L1232.1,33.4" stroke="#8fc3e2" stroke-width="3.8" stroke-linecap="round"/><radialGradient id="mg2" cx="0.4" cy="0.35" r="0.7"><stop offset="0" stop-color="#ffffff"/><stop offset="1" stop-color="#dcdfe2"/></radialGradient><circle cx="1246" cy="18.8" r="9.1" fill="url(#mg2)" stroke="#9b9b9b" stroke-width="1.6"/><g transform="rotate(-33.5 1281 19)"><linearGradient id="tg" x1="0" y1="0" x2="0" y2="1"><stop offset="0" stop-color="#fafafa"/><stop offset="0.5" stop-color="#d9d9d9"/><stop offset="1" stop-color="#9c9c9c"/></linearGradient><rect x="1283" y="14.8" width="13.5" height="8.4" rx="1.5" fill="url(#tg)" stroke="#8a8a8a" stroke-width="1"/><rect x="1267" y="12.8" width="17" height="12.4" rx="2.5" fill="url(#tg)" stroke="#858585" stroke-width="1.1"/><ellipse cx="1268.2" cy="19" rx="3" ry="6" fill="#c9c9c9" stroke="#7a7a7a" stroke-width="1"/><ellipse cx="1268.2" cy="19" rx="1.6" ry="3.6" fill="#efefef" stroke="#9a9a9a" stroke-width="0.7"/></g><path d="M1280.5,27 L1287.3,22 V24.7 H1294.8 V29.4 H1287.3 V32 Z" fill="#6fb0d8" stroke="#4a88b0" stroke-width="0.9" stroke-linejoin="round"/><g opacity="0.55"><path d="M1305.5,14 C1309,9 1314,9.5 1318.5,12 C1323,9 1329,9.5 1332.5,12 V29 C1329,26.5 1323,26 1318.5,29 C1314,32.5 1309,33 1305.5,31 Z" fill="#ededed" stroke="#cfcfcf" stroke-width="1"/><path d="M1305.5,14 C1309,17 1314,16 1318.5,12 V29 C1314,32.5 1309,33 1305.5,31 Z" fill="#e2e2e2" stroke="#cfcfcf" stroke-width="0.8"/><path d="M1325,11 V27" stroke="#d2d2d2"/></g><linearGradient id="vo" x1="0" y1="0" x2="1" y2="1"><stop offset="0" stop-color="#a9d8ee"/><stop offset="1" stop-color="#5fa7cc"/></linearGradient><g fill="none" stroke="#3e3e3e" stroke-width="1"><path d="M1343.5,16.2 L1351.7,8.3 H1371 V28.9 L1363,35.5"/><path d="M1363,16.2 L1371,8.3"/><path d="M1351.7,8.3 V16.2 M1363,28.9 H1371"/></g><rect x="1343.5" y="16.2" width="19.5" height="19.3" fill="url(#vo)" stroke="#3b6f8c" stroke-width="1.1"/><path d="M1356.6,8.5 V13 M1354.4,11.6 L1356.6,14.8 L1358.8,11.6 Z" stroke="#3e3e3e" stroke-width="1.3" fill="#3e3e3e"/><path d="M1370.8,22.2 H1366.5 M1367.8,20 L1364.4,22.2 L1367.8,24.4 Z" stroke="#3e3e3e" stroke-width="1.3" fill="#3e3e3e"/><path d="M1379,20.2 h7 l-3.5,3.6 Z" fill="#8d8d8d"/><linearGradient id="ds" x1="0" y1="0" x2="1" y2="0"><stop offset="0" stop-color="#5ea3c8"/><stop offset="1" stop-color="#a9d7ec"/></linearGradient><path d="M1398.6,13.2 L1411,8.6 L1421.8,13 L1409.6,17.6 Z" fill="#dff1f8" stroke="#7d8c94" stroke-width="0.9"/><path d="M1398.6,13.2 L1409.6,17.6 V34.4 L1398.6,28.4 Z" fill="url(#ds)" stroke="#4b7a92" stroke-width="0.9"/><path d="M1409.6,17.6 L1421.8,13 V28.6 L1409.6,34.4 Z" fill="#f3f3f3" stroke="#8e8e8e" stroke-width="0.9"/><path d="M1409.6,17.6 L1414.8,15.6 V32 L1409.6,34.4 Z" fill="#9ccfe6"/><path d="M1404,11.2 L1415.6,15.4" stroke="#b9dbea" stroke-width="3"/><path d="M1432,20.2 h7 l-3.5,3.6 Z" fill="#8d8d8d"/><path d="M1448.4,22 C1454,13.5 1470,12.5 1476.8,22 C1470,31.5 1454,31 1448.4,22 Z" fill="#ececec" stroke="#8a8a8a" stroke-width="1.8"/><circle cx="1462.6" cy="21.8" r="6.2" fill="#7d7d7d"/><path d="M1462.6,15.6 A6.2,6.2 0 0 0 1462.6,28 Z" fill="#4f4f4f"/><circle cx="1460.4" cy="19.6" r="1.5" fill="#d8d8d8"/><path d="M1463,11 V32.8" stroke="#555" stroke-width="2"/><path d="M1484.8,20.2 h7 l-3.5,3.6 Z" fill="#8d8d8d"/><radialGradient id="fs" cx="0.35" cy="0.3" r="0.75"><stop offset="0" stop-color="#f6f6f6"/><stop offset="1" stop-color="#d6d6d6"/></radialGradient><circle cx="1514.2" cy="19.6" r="12.7" fill="url(#fs)"/><path d="M1519,29 L1528,19.5 L1531.5,23 L1522,33.5 L1514,36.5 Z" fill="#e6e6e6" stroke="#d9d9d9" stroke-width="1"/><rect x="1540" y="18.4" width="27.8" height="17.2" fill="#d9d9d9"/><rect x="1541" y="24" width="4.2" height="3.3" fill="#f4f4f4"/><rect x="1563.5" y="24" width="4.2" height="3.3" fill="#f4f4f4"/><rect x="1545.5" y="31" width="4.2" height="3.3" fill="#f4f4f4"/><rect x="1558.5" y="31" width="4.2" height="3.3" fill="#f4f4f4"/><circle cx="1553.6" cy="18" r="9.8" fill="url(#fs)"/><path d="M1575.8,20.2 h7 l-3.5,3.6 Z" fill="#8d8d8d"/><linearGradient id="mn" x1="0" y1="0" x2="0.3" y2="1"><stop offset="0" stop-color="#d4d4d4"/><stop offset="1" stop-color="#f6f6f6"/></linearGradient><rect x="1594.8" y="10.8" width="24.6" height="16.4" fill="url(#mn)" stroke="#555" stroke-width="1.8"/><rect x="1604.9" y="27.8" width="4.2" height="3" fill="#666"/><path d="M1601.8,33 L1603.2,30.7 H1610.8 L1612.2,33 Z" fill="#5a5a5a"/><path d="M1628.8,20.2 h7 l-3.5,3.6 Z" fill="#8d8d8d"/><rect x="2373.7" y="12" width="16.4" height="20" fill="none" stroke="#9b9b9b" stroke-width="1.1"/><path d="M2378.3,18.6 V25.4 L2374.8,22 Z" fill="#9b9b9b"/><rect x="2411.5" y="12" width="16.4" height="20" fill="none" stroke="#9b9b9b" stroke-width="1.1"/><path d="M2423.6,18.6 V25.4 L2427,22 Z" fill="#9b9b9b"/><rect x="2450" y="29" width="15.6" height="2.6" fill="#9b9b9b"/><path d="M2489.5,17 V12.8 H2506 V26 H2501.5" fill="none" stroke="#9b9b9b" stroke-width="1.2"/><rect x="2484.9" y="17.4" width="16.4" height="13.6" fill="#fff" stroke="#9b9b9b" stroke-width="1.2"/><path d="M2526.8,14.8 L2541.8,29.8 M2541.8,14.8 L2526.8,29.8" stroke="#9b9b9b" stroke-width="1.7"/><path d="M2403.6,71.5 L2411.5,64.8 L2420.3,73.4 L2440.3,53 L2446,58 L2420.6,85.6 Z" fill="#c6e6c1"/><path d="M2471.8,102.5 L2478.4,96 L2489.5,107 L2500.6,96 L2507.2,102.5 L2496.2,113.6 L2507.2,124.8 L2500.6,131.4 L2489.5,120.3 L2478.4,131.4 L2471.8,124.8 L2482.8,113.6 Z" fill="#f5cfca" stroke="#f5cfca" stroke-width="2" stroke-linejoin="round"/><rect x="2520" y="77.5" width="40" height="251.0" fill="#d7d7d7"/><rect x="2520" y="220.5" width="40" height="36" fill="#f4f4f4"/><path d="M2520,77.5 H2559" stroke="#a3a3a3" stroke-width="1"/><path d="M2520,112.5 H2559" stroke="#a3a3a3" stroke-width="1"/><path d="M2520,148.5 H2559" stroke="#a3a3a3" stroke-width="1"/><path d="M2520,184.5 H2559" stroke="#a3a3a3" stroke-width="1"/><path d="M2520,220.5 H2559" stroke="#a3a3a3" stroke-width="1"/><path d="M2520,256.5 H2559" stroke="#a3a3a3" stroke-width="1"/><path d="M2520,292.5 H2559" stroke="#a3a3a3" stroke-width="1"/><path d="M2520,328.5 H2559" stroke="#a3a3a3" stroke-width="1"/><path d="M2520.5,77.5 V328.5" stroke="#a3a3a3" stroke-width="1"/><path d="M2529.3,95.5 V108.2 H2550.8 V95.5 L2540,84.5 Z" fill="#f2f2f2" stroke="#5a5a5a" stroke-width="1.1"/><rect x="2536.3" y="97.6" width="6.8" height="10.6" fill="#fafafa" stroke="#4a4a4a" stroke-width="1.1"/><rect x="2540.4" y="101.8" width="1.6" height="2.2" fill="#333"/><path d="M2527,95.6 L2540,82.3 L2553.4,95.6" fill="none" stroke="#1d4f64" stroke-width="3.6" stroke-linejoin="miter"/><path d="M2527.4,95.2 L2540,82.5 L2553,95.2" fill="none" stroke="#3f8fb0" stroke-width="2" stroke-linejoin="miter"/><linearGradient id="bk" x1="0" y1="0" x2="1" y2="0"><stop offset="0" stop-color="#fdfdfd"/><stop offset="1" stop-color="#cfcfcf"/></linearGradient><path d="M2528.3,121.5 L2533.5,118.2 L2551,124 V139.5 L2535,144.3 L2528.3,138.5 Z" fill="url(#bk)" stroke="#4d4d4d" stroke-width="1.1" stroke-linejoin="round"/><path d="M2533.5,118.2 L2537,122.8 M2538.5,117.6 L2542,122 M2543.6,117.2 L2546.5,121.5" stroke="#4d4d4d" stroke-width="1"/><path d="M2535,126 V144 M2540.4,124.4 V142.6 M2545.6,122.8 V141" stroke="#6a6a6a" stroke-width="1"/><path d="M2528.3,121.5 L2535,126 L2551,124" fill="none" stroke="#4d4d4d" stroke-width="1"/><linearGradient id="fd" x1="0" y1="0" x2="1" y2="1"><stop offset="0" stop-color="#9a9a9a"/><stop offset="1" stop-color="#e6e6e6"/></linearGradient><path d="M2524.6,179.6 V157 L2526.2,155.4 H2532.4 L2534,158 H2550.6 V163.6" fill="url(#fd)" stroke="#4f4f4f" stroke-width="1.1" stroke-linejoin="round"/><path d="M2524.6,179.8 L2533.4,164 H2555.4 L2547.2,179.8 Z" fill="#f0f0f0" stroke="#4f4f4f" stroke-width="1.1" stroke-linejoin="round"/><rect x="2526.4" y="191.2" width="27.4" height="24.2" fill="#fbfbfb" stroke="#3a3a3a" stroke-width="1.2"/><rect x="2529.8" y="194.3" width="10.4" height="5.5" fill="#f6d020" stroke="#b79300" stroke-width="0.9"/><rect x="2543.8" y="194.3" width="6.9" height="5.5" fill="#f6d020" stroke="#b79300" stroke-width="0.9"/><path d="M2533.3,203.4 H2537.2 V208 H2540.4 V212.4 H2529.8 V208 H2533.3 Z" fill="#f6d020" stroke="#b79300" stroke-width="0.9"/><rect x="2543.8" y="206" width="9.8" height="9.2" fill="#dcdcdc" stroke="#4a4a4a" stroke-width="1"/><rect x="2543.8" y="206" width="9.8" height="2.6" fill="#777"/><clipPath id="bct"><circle cx="2540.20" cy="238.00" r="12.8"/></clipPath><radialGradient id="bht" cx="0.33" cy="0.28" r="0.45"><stop offset="0" stop-color="#fff" stop-opacity="0.95"/><stop offset="0.35" stop-color="#fff" stop-opacity="0.35"/><stop offset="1" stop-color="#fff" stop-opacity="0"/></radialGradient><radialGradient id="bst" cx="0.5" cy="0.5" r="0.5"><stop offset="0.7" stop-color="#000" stop-opacity="0"/><stop offset="1" stop-color="#000" stop-opacity="0.45"/></radialGradient><g clip-path="url(#bct)"><rect x="2527.40" y="225.20" width="25.6" height="25.6" fill="#2c66d3"/><path d="M2526.40,239.50 Q2537.20,238.50 2542.70,241.00 Q2541.20,247.00 2539.20,251.80 H2526.40 Z" fill="#2fa83a"/><path d="M2542.70,241.00 Q2548.20,239.00 2554.00,240.00 V251.80 H2539.20 Q2541.20,247.00 2542.70,241.00 Z" fill="#f2c21e"/><path d="M2541.70,224.20 Q2540.70,234.00 2542.70,241.00 Q2548.20,239.00 2554.00,240.00 V224.20 Z" fill="#d8261c"/><circle cx="2540.20" cy="238.00" r="12.8" fill="url(#bst)"/><circle cx="2540.20" cy="238.00" r="12.8" fill="url(#bht)"/></g><rect x="2526.4" y="262.4" width="27.4" height="24.8" fill="#f1f1f1" stroke="#1d5a78" stroke-width="1.3"/><rect x="2527" y="263" width="26.2" height="3.8" fill="#3f8db6"/><rect x="2529.6" y="268.4" width="6.8" height="3.6" rx="0.6" fill="#4c9dc4" stroke="#1d5a78" stroke-width="0.8"/><path d="M2539.2,270.2 H2550.6" stroke="#333" stroke-width="1.1"/><rect x="2529.6" y="274.4" width="6.8" height="3.6" rx="0.6" fill="#4c9dc4" stroke="#1d5a78" stroke-width="0.8"/><path d="M2539.2,276.2 H2550.6" stroke="#333" stroke-width="1.1"/><rect x="2529.6" y="280.4" width="6.8" height="3.6" rx="0.6" fill="#4c9dc4" stroke="#1d5a78" stroke-width="0.8"/><path d="M2539.2,282.2 H2550.6" stroke="#333" stroke-width="1.1"/><radialGradient id="rf" cx="0.35" cy="0.3" r="0.8"><stop offset="0" stop-color="#7cc4f4"/><stop offset="0.6" stop-color="#1f74d0"/><stop offset="1" stop-color="#1350a8"/></radialGradient><circle cx="2539.9" cy="310.6" r="13.6" fill="url(#rf)"/><path d="M2529.5,308 C2531,301.5 2539,298 2545.8,301.2 L2547.2,297.5 L2551.8,305.6 L2543,308.2 L2544.3,304.8 C2540,303 2535.5,304.8 2533.6,308.8 Z" fill="#fff" stroke="#2b2b2b" stroke-width="0.9" stroke-linejoin="round"/><path d="M2550.4,313 C2549,319.6 2541,323 2534.2,320 L2532.8,323.6 L2528.2,315.5 L2537,312.9 L2535.7,316.3 C2540,318 2544.5,316.3 2546.4,312.2 Z" fill="#fff" stroke="#2b2b2b" stroke-width="0.9" stroke-linejoin="round"/><path d="M331.8,1224.0 H309 V1229.6 H331.8 Z" fill="#1414c8"/><path d="M300,1226.8 L307,1221.2 L313,1221.2 L313,1232.3999999999999 L307,1232.3999999999999 Z" fill="#1010b4"/><path d="M330.8,1224.0 H352 V1229.6 H330.8 Z" fill="#d01010"/><path d="M361.6,1226.8 L355,1221.2 L349,1221.2 L349,1232.3999999999999 L355,1232.3999999999999 Z" fill="#b80e0e"/><path d="M328.0,1227.8 V1194 H333.6 V1227.8 Z" fill="#0e6e10"/><path d="M330.8,1183 L336.8,1196 H324.8 Z" fill="#0c640e"/><text x="332.5" y="1173.5" text-anchor="middle" font-family="Liberation Sans, sans-serif" font-size="11.5" fill="#117a11">Y</text><text x="369.8" y="1227" text-anchor="middle" font-family="Liberation Sans, sans-serif" font-size="11.5" fill="#e04040">X</text><text x="295.2" y="1227" text-anchor="middle" font-family="Liberation Sans, sans-serif" font-size="11.5" font-style="italic" fill="#2a2ad0">Z</text></svg>


<!-- ===== bottom bar ===== -->
<div class="abs" id="bbar">

<div class="abs" style="left:2px;top:0;width:97px;height:24px;background:#8e94b4;border-top:1px solid #5d6282"></div>
<svg class="abs" style="left:2px;top:0" width="97" height="24" viewBox="0 0 97 24">
 <g stroke="#7d83a5" stroke-width="1"><path d="M24.5,0V24M48.5,0V24M72.5,0V24"/></g>
 <g fill="#a9aec8"><path d="M16,5 V19 L8,12 Z"/><rect x="7" y="5" width="1.8" height="14"/><path d="M40,5 V19 L31,12 Z"/><path d="M57,5 V19 L66,12 Z"/><path d="M81,5 V19 L89,12 Z"/><rect x="88.5" y="5" width="1.8" height="14"/></g>
</svg>
<div class="abs" style="left:99px;top:-1px;width:88px;height:25px;background:#fbfbfb;font-weight:bold;font-size:18.5px;letter-spacing:1.2px;line-height:25px;text-align:center;padding-left:6px;color:#111">Model</div>
<div class="abs" style="left:187px;top:0;width:172px;height:24px;background:#cfcfcf;border:1px solid #9a9a9a;border-top:none;font-size:18px;letter-spacing:0.5px;line-height:24px;text-align:left;padding-left:16px;color:#222">Motion Study 1</div>

</div>
</body>
</html>
